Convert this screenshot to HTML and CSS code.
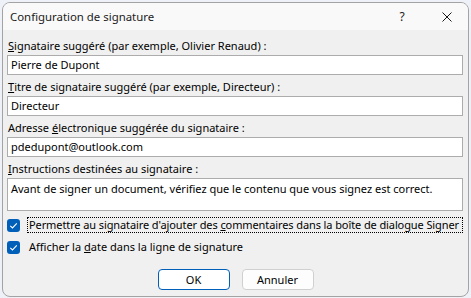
FILE: index.html
```html
<!DOCTYPE html>
<html lang="fr">
<head>
<meta charset="utf-8">
<link rel="stylesheet" href="styles.css">
</head>
<body>
<div class="window">
  <div class="titlebar">
    <span class="title">Configuration de signature</span>
    <span class="tb-btns">
      <span class="help">?</span>
      <svg class="close" width="10" height="10" viewBox="0 0 10 10"><path d="M0.5 0.5L9.5 9.5M9.5 0.5L0.5 9.5" stroke="#1a1a1a" stroke-width="1" fill="none"/></svg>
    </span>
  </div>
  <div class="content">
    <label class="lbl"><u>S</u>ignataire suggéré (par exemple, Olivier Renaud) :</label>
    <div class="field">Pierre de Dupont</div>
    <label class="lbl"><u>T</u>itre de signataire suggéré (par exemple, Directeur) :</label>
    <div class="field">Directeur</div>
    <label class="lbl">Adresse <u>é</u>lectronique suggérée du signataire :</label>
    <div class="field">pdedupont@outlook.com</div>
    <label class="lbl"><u>I</u>nstructions destinées au signataire :</label>
    <div class="field area">Avant de signer un document, vérifiez que le contenu que vous signez est correct.</div>
    <div class="check first">
      <span class="box"><svg width="13" height="13" viewBox="0 0 13 13"><path d="M3.3 6.8L5.5 9L9.8 4.4" stroke="#fff" stroke-width="1.1" fill="none"/></svg></span>
      <span class="ctext focus">Permettre au signataire d'ajouter des <u>c</u>ommentaires dans la boîte de dialogue Signer</span>
    </div>
    <div class="check">
      <span class="box"><svg width="13" height="13" viewBox="0 0 13 13"><path d="M3.3 6.8L5.5 9L9.8 4.4" stroke="#fff" stroke-width="1.1" fill="none"/></svg></span>
      <span class="ctext">Afficher la <u>d</u>ate dans la ligne de signature</span>
    </div>
    <div class="buttons">
      <button class="btn default">OK</button>
      <button class="btn">Annuler</button>
    </div>
  </div>
</div>
</body>
</html>
```
FILE: styles.css
```css
html, body {
  margin: 0;
  padding: 0;
}
body {
  background: #eef2f8;
  padding: 2px 0 0 2px;
  font-family: "Noto Sans", "Open Sans", sans-serif;
  font-size: 11px;
  color: #000;
}
.window {
  width: 467px;
  height: 295px;
  box-sizing: border-box;
  border: 1px solid #a3a3a3;
  border-radius: 8px;
  background: #f0f0f0;
  overflow: hidden;
  display: flex;
  flex-direction: column;
}
.titlebar {
  height: 27px;
  background: #f9f9f9;
  display: flex;
  align-items: center;
  justify-content: space-between;
  padding: 0 0 0 7px;
  flex: none;
}
.title {
  font-size: 11.4px;
  color: #1b1b1b;
}
.tb-btns {
  display: flex;
  align-items: center;
}
.help {
  font-size: 12px;
  width: 20px;
  text-align: center;
  margin-right: 30px;
  color: #1b1b1b;
}
.close {
  margin: 0 16px 0 0;
}
.content {
  padding: 8px 4px 0 4px;
  display: flex;
  flex-direction: column;
}
.lbl {
  line-height: 16px;
  height: 16px;
  padding-left: 1px;
  white-space: nowrap;
}
.field {
  margin-top: 1px;
  margin-bottom: 4px;
  height: 20px;
  box-sizing: border-box;
  border: 1px solid #acacac;
  background: #fff;
  padding: 0 3px;
  line-height: 18px;
  width: 456px;
  white-space: nowrap;
}
.area {
  height: 33px;
  line-height: 20px;
  margin-bottom: 0;
}
.check {
  display: flex;
  align-items: center;
  height: 16px;
  margin-top: 6px;
}
.box {
  width: 13px;
  height: 13px;
  border-radius: 3px;
  background: #005fb8;
  display: flex;
  align-items: center;
  justify-content: center;
  flex: none;
}
.box svg {
  width: 13px;
  height: 13px;
}
.ctext {
  margin-left: 7px;
  line-height: 14px;
  padding: 0 1px;
  border: 1px dotted transparent;
  white-space: nowrap;
}
.ctext.focus {
  border-color: #000;
  width: 432px;
  box-sizing: content-box;
  letter-spacing: -0.1px;
}
.buttons {
  display: flex;
  justify-content: center;
  gap: 12px;
  margin-top: 14px;
}
.btn {
  width: 72px;
  height: 21px;
  box-sizing: border-box;
  border: 1px solid #d0d0d0;
  border-radius: 4px;
  background: #fdfdfd;
  font-family: inherit;
  font-size: 11px;
  color: #000;
  padding: 0;
}
.btn.default {
  border-color: #005fb8;
  background: #fff;
}
```
